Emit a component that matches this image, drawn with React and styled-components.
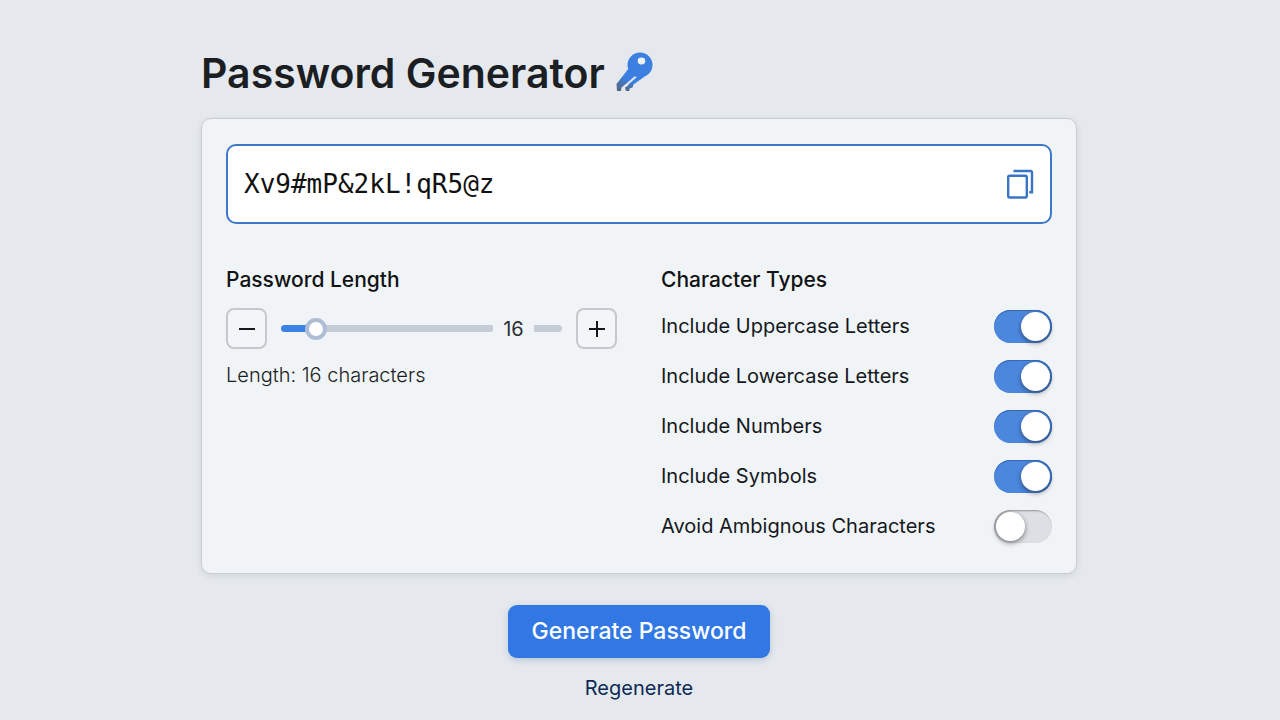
import React, { useState } from "react"
import styled, { createGlobalStyle } from "styled-components"

const GlobalStyle = createGlobalStyle`
  * {
    box-sizing: border-box;
  }

  body {
    background-color: #e5e9ed;
    color: #15181c;
    font-family: Inter, "Liberation Sans", sans-serif;
    font-size: 20px;
    margin: 0;
  }
`

const Page = styled.main`
  margin: 0 auto;
  max-width: 926px;
  padding: 44px 26px 16px 24px;
`

const Header = styled.header`
  align-items: center;
  display: flex;
  gap: 10px;
  margin-bottom: 16px;
`

const Title = styled.h1`
  color: #1b1e22;
  font-size: 41px;
  font-weight: 600;
  line-height: 58px;
  margin: 0;
`

const Card = styled.section`
  background-color: #f0f4f7;
  border: 1px solid #c9cdd2;
  border-radius: 10px;
  box-shadow: 0 2px 6px rgba(60, 75, 95, 0.12);
  padding: 25px 24px 30px;
`

const Output = styled.div`
  align-items: center;
  background-color: white;
  border: 2px solid #3d78c8;
  border-radius: 10px;
  display: flex;
  height: 80px;
  padding: 0 16px;
`

const OutputField = styled.input`
  background: none;
  border: 0;
  color: #111;
  flex: 1;
  font-family: "DejaVu Sans Mono", monospace;
  font-size: 26px;
  min-width: 0;
  outline: none;
  padding: 0;
`

const CopyButton = styled.button`
  background: none;
  border: 0;
  cursor: pointer;
  display: flex;
  padding: 0;
`

const Columns = styled.div`
  display: grid;
  gap: 44px;
  grid-template-columns: 1fr 1fr;
  margin-top: 40px;

  @media (max-width: 768px) {
    grid-template-columns: 1fr;
  }
`

const Heading = styled.h2`
  color: #101214;
  display: block;
  font-size: 21px;
  font-weight: 500;
  line-height: 32px;
  margin: 0 0 12px;
`

const LengthRow = styled.div`
  align-items: center;
  display: flex;
  gap: 14px;
`

const StepButton = styled.button`
  align-items: center;
  background-color: #f3f6f9;
  border: 2px solid #c5c8cc;
  border-radius: 8px;
  cursor: pointer;
  display: flex;
  height: 41px;
  justify-content: center;
  padding: 0;
  width: 41px;
`

const SliderGroup = styled.div`
  align-items: center;
  display: flex;
  flex: 1;
  min-width: 0;
`

const Slider = styled.input`
  appearance: none;
  background: none;
  flex: 1;
  height: 24px;
  margin: 0;
  min-width: 0;

  &::-webkit-slider-runnable-track {
    background: linear-gradient(
      to right,
      #3b82e6 ${({ $fill }) => $fill}%,
      #c5ccd8 ${({ $fill }) => $fill}%
    );
    border-radius: 4px 2px 2px 4px;
    height: 7px;
  }

  &::-webkit-slider-thumb {
    appearance: none;
    background-color: white;
    border: 4px solid #aebdd6;
    border-radius: 50%;
    height: 22px;
    margin-top: -7px;
    width: 22px;
  }
`

const SliderValue = styled.output`
  color: #2b2f34;
  line-height: 28px;
  text-align: center;
  width: 41px;
`

const SliderTail = styled.span`
  background-color: #c5ccd8;
  border-radius: 0 4px 4px 0;
  height: 7px;
  width: 28px;
`

const LengthText = styled.p`
  color: #1b1e22;
  font-weight: 300;
  line-height: 28px;
  margin: 12px 0 0;
`

const OptionList = styled.div`
  display: grid;
  gap: 17px;
`

const TypesHeading = styled(Heading)`
  margin-bottom: 14px;
`

const Option = styled.label`
  align-items: center;
  cursor: pointer;
  display: flex;
  justify-content: space-between;
  line-height: 33px;
`

const Toggle = styled.input`
  appearance: none;
  background-color: #dcdfe3;
  border-radius: 17px;
  box-shadow: inset 1px 1px 2px rgba(0, 0, 0, 0.35);
  cursor: pointer;
  display: flex;
  flex: none;
  height: 33px;
  margin: 0;
  padding: 2px;
  width: 58px;

  &::before {
    background-color: white;
    border-radius: 50%;
    box-shadow: 0 2px 5px rgba(0, 0, 0, 0.45);
    content: "";
    height: 29px;
    width: 29px;
  }

  &:checked {
    background-color: #4c87de;
    box-shadow: inset 0 1px 1px #3568b4, inset -1px 0 1px #3568b4;
    justify-content: flex-end;
  }
`

const Actions = styled.div`
  align-items: center;
  display: flex;
  flex-direction: column;
  gap: 16px;
  margin-top: 31px;
`

const GenerateButton = styled.button`
  background-color: #3178e4;
  border: 0;
  border-radius: 9px;
  box-shadow: 0 2px 6px rgba(49, 90, 150, 0.25);
  color: white;
  cursor: pointer;
  font-family: inherit;
  font-size: 23px;
  font-weight: 500;
  line-height: 53px;
  padding: 0 24px;
`

const RegenerateButton = styled.button`
  background: none;
  border: 0;
  color: #0c2a55;
  cursor: pointer;
  font-family: inherit;
  font-size: 20px;
  line-height: 28px;
  padding: 0;
`

const MIN_LENGTH = 4
const MAX_LENGTH = 100

const OPTIONS = [
  { key: "upper", label: "Include Uppercase Letters" },
  { key: "lower", label: "Include Lowercase Letters" },
  { key: "numbers", label: "Include Numbers" },
  { key: "symbols", label: "Include Symbols" },
  { key: "ambiguous", label: "Avoid Ambignous Characters" },
]

const CHARS = {
  upper: "ABCDEFGHIJKLMNOPQRSTUVWXYZ",
  lower: "abcdefghijklmnopqrstuvwxyz",
  numbers: "0123456789",
  symbols: "!@#$%&*?",
}

const createPassword = (length, types) => {
  let pool = Object.keys(CHARS)
    .filter((key) => types[key])
    .map((key) => CHARS[key])
    .join("")

  if (types.ambiguous) {
    pool = pool.replace(/[Il1O0o]/g, "")
  }
  if (!pool) return ""

  return Array.from(
    crypto.getRandomValues(new Uint32Array(length)),
    (n) => pool[n % pool.length]
  ).join("")
}

const KeyIcon = () => (
  <svg width="38" height="44" viewBox="0 0 38 44" aria-hidden="true">
    <defs>
      <linearGradient id="shaft" x1="0.8" y1="0" x2="0.1" y2="1">
        <stop offset="0.45" stopColor="#3b7fe0" />
        <stop offset="1" stopColor="#56677c" />
      </linearGradient>
    </defs>
    <path
      d="M14 17 L22 25 L6.5 36.5 L6 40 L2 40 L1.5 33 Z"
      fill="url(#shaft)"
    />
    <path
      d="M21 26 L14.5 31 L13 34.5 L10 36.5 L11 40 L14.5 40 L14.5 37.5 L17.5 36.5 L18.5 33.5 L29 26 Z"
      fill="url(#shaft)"
    />
    <path d="M21.5 25 L9.5 35.5" stroke="#e5e9ed" strokeWidth="2" />
    <circle cx="25" cy="14" r="12.5" fill="#3b7fe0" />
    <ellipse cx="26.5" cy="10" rx="3.8" ry="3.4" fill="#eef3f8" />
  </svg>
)

const CopyIcon = () => (
  <svg
    width="28"
    height="30"
    viewBox="0 0 28 30"
    fill="none"
    stroke="#3a74c4"
    strokeWidth="2.4"
    aria-hidden="true"
  >
    <rect x="2.2" y="6.7" width="18.6" height="21.8" rx="1.5" />
    <path d="M7.5 2 H24.5 Q26 2 26 3.5 V23.3 H23.2" />
  </svg>
)

const SignIcon = ({ plus }) => (
  <svg width="18" height="18" stroke="#15181c" strokeWidth="2" aria-hidden="true">
    <path d={plus ? "M1 9 H17 M9 1 V17" : "M1 9 H17"} />
  </svg>
)

export default function App() {
  const [length, setLength] = useState(16)
  const [password, setPassword] = useState("Xv9#mP&2kL!qR5@z")
  const [types, setTypes] = useState({
    upper: true,
    lower: true,
    numbers: true,
    symbols: true,
    ambiguous: false,
  })

  const changeLength = (value) =>
    setLength(Math.min(MAX_LENGTH, Math.max(MIN_LENGTH, value)))

  const generate = () => setPassword(createPassword(length, types))

  const fill = 5 + ((length - MIN_LENGTH) / (MAX_LENGTH - MIN_LENGTH)) * 90

  return (
    <Page>
      <GlobalStyle />
      <Header>
        <Title>Password Generator</Title>
        <KeyIcon />
      </Header>

      <Card>
        <Output>
          <OutputField
            aria-label="Generated password"
            readOnly
            spellCheck={false}
            value={password}
          />
          <CopyButton
            aria-label="Copy password"
            onClick={() => navigator.clipboard.writeText(password)}
          >
            <CopyIcon />
          </CopyButton>
        </Output>

        <Columns>
          <div>
            <Heading as="label" htmlFor="length">
              Password Length
            </Heading>
            <LengthRow>
              <StepButton
                aria-label="Decrease length"
                onClick={() => changeLength(length - 1)}
              >
                <SignIcon />
              </StepButton>
              <SliderGroup>
                <Slider
                  $fill={fill}
                  id="length"
                  type="range"
                  min={MIN_LENGTH}
                  max={MAX_LENGTH}
                  value={length}
                  onChange={(e) => changeLength(Number(e.target.value))}
                />
                <SliderValue htmlFor="length">{length}</SliderValue>
                <SliderTail />
              </SliderGroup>
              <StepButton
                aria-label="Increase length"
                onClick={() => changeLength(length + 1)}
              >
                <SignIcon plus />
              </StepButton>
            </LengthRow>
            <LengthText>Length: {length} characters</LengthText>
          </div>

          <div>
            <TypesHeading>Character Types</TypesHeading>
            <OptionList>
              {OPTIONS.map(({ key, label }) => (
                <Option key={key}>
                  {label}
                  <Toggle
                    type="checkbox"
                    checked={types[key]}
                    onChange={() => setTypes({ ...types, [key]: !types[key] })}
                  />
                </Option>
              ))}
            </OptionList>
          </div>
        </Columns>
      </Card>

      <Actions>
        <GenerateButton onClick={generate}>Generate Password</GenerateButton>
        <RegenerateButton onClick={generate}>Regenerate</RegenerateButton>
      </Actions>
    </Page>
  )
}
